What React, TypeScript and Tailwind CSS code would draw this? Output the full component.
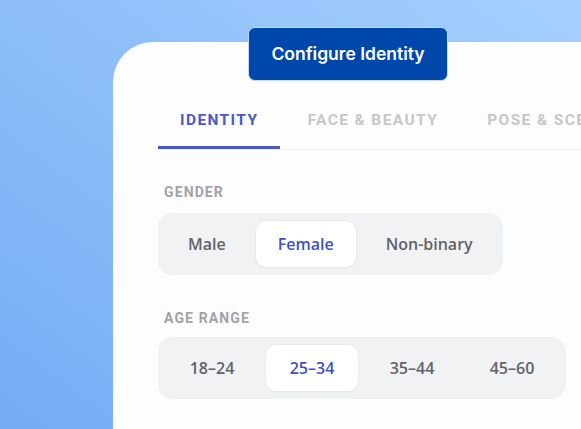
import React from 'react';

const tabs = ['IDENTITY', 'FACE & BEAUTY', 'POSE & SCENE'];
const genders = ['Male', 'Female', 'Non-binary'];
const ages = ['18–24', '25–34', '35–44', '45–60'];

const Segmented: React.FC<{ items: string[]; active: string; fixed?: boolean }> = ({ items, active, fixed }) => (
  <div className="inline-flex gap-2 self-start rounded-[14px] bg-[#f1f2f4] p-2">
    {items.map((item) => (
      <button
        key={item}
        className={`h-[46px] rounded-[10px] text-[16px] font-semibold ${fixed ? 'w-[92px]' : 'px-[22px]'} ${
          item === active
            ? 'bg-white text-[#3f51c6] shadow-[0_1px_2px_rgba(0,0,0,0.08)] ring-1 ring-[#e9eaee]'
            : 'text-[#5f6368]'
        }`}
        style={{ fontFamily: '"Open Sans", "Noto Sans", sans-serif' }}
      >
        {item}
      </button>
    ))}
  </div>
);

const App: React.FC = () => {
  const [tab, setTab] = React.useState('IDENTITY');

  return (
    <div
      className="relative h-[429px] w-[581px] overflow-hidden bg-gradient-to-bl from-[#a5cfff] to-[#74acf4] pl-[113px] pt-[42px]"
      style={{ fontFamily: 'Roboto, "Noto Sans", sans-serif' }}
    >
      {/* Card */}
      <div className="h-[420px] w-[520px] rounded-tl-[40px] bg-[#fdfdfe] pl-[45px] pt-[67px]">
        {/* Tabs */}
        <div className="flex gap-[5px] border-b border-[#f0f1f3]">
          {tabs.map((t) => (
            <button
              key={t}
              onClick={() => setTab(t)}
              className={`shrink-0 whitespace-nowrap border-b-[3px] px-[22px] pb-[14px] text-[15.5px] font-bold tracking-[0.09em] ${
                t === tab ? 'border-[#4758c5] text-[#4a5bc6]' : 'border-transparent text-[#c5c7cb]'
              }`}
            >
              {t}
            </button>
          ))}
        </div>

        {/* Gender */}
        <div className="mt-[32px] flex flex-col">
          <div className="mb-[11px] pl-[6px] text-[14px] font-bold leading-5 tracking-[0.08em] text-[#a0a3a8]">GENDER</div>
          <Segmented items={genders} active="Female" />
        </div>

        {/* Age range */}
        <div className="mt-[33px] flex flex-col">
          <div className="mb-[9px] pl-[6px] text-[14px] font-bold leading-5 tracking-[0.08em] text-[#a0a3a8]">AGE RANGE</div>
          <Segmented items={ages} active="25–34" fixed />
        </div>
      </div>

      {/* Floating label */}
      <div
        className="absolute left-[248px] top-[27px] flex h-[54px] w-[200px] items-center justify-center rounded-[7px] border border-[#c9d9f2] bg-[#0047ab] text-[17.5px] font-semibold text-white"
        style={{ fontFamily: 'Inter, "Noto Sans", sans-serif' }}
      >
        Configure Identity
      </div>
    </div>
  );
};

export default App;
